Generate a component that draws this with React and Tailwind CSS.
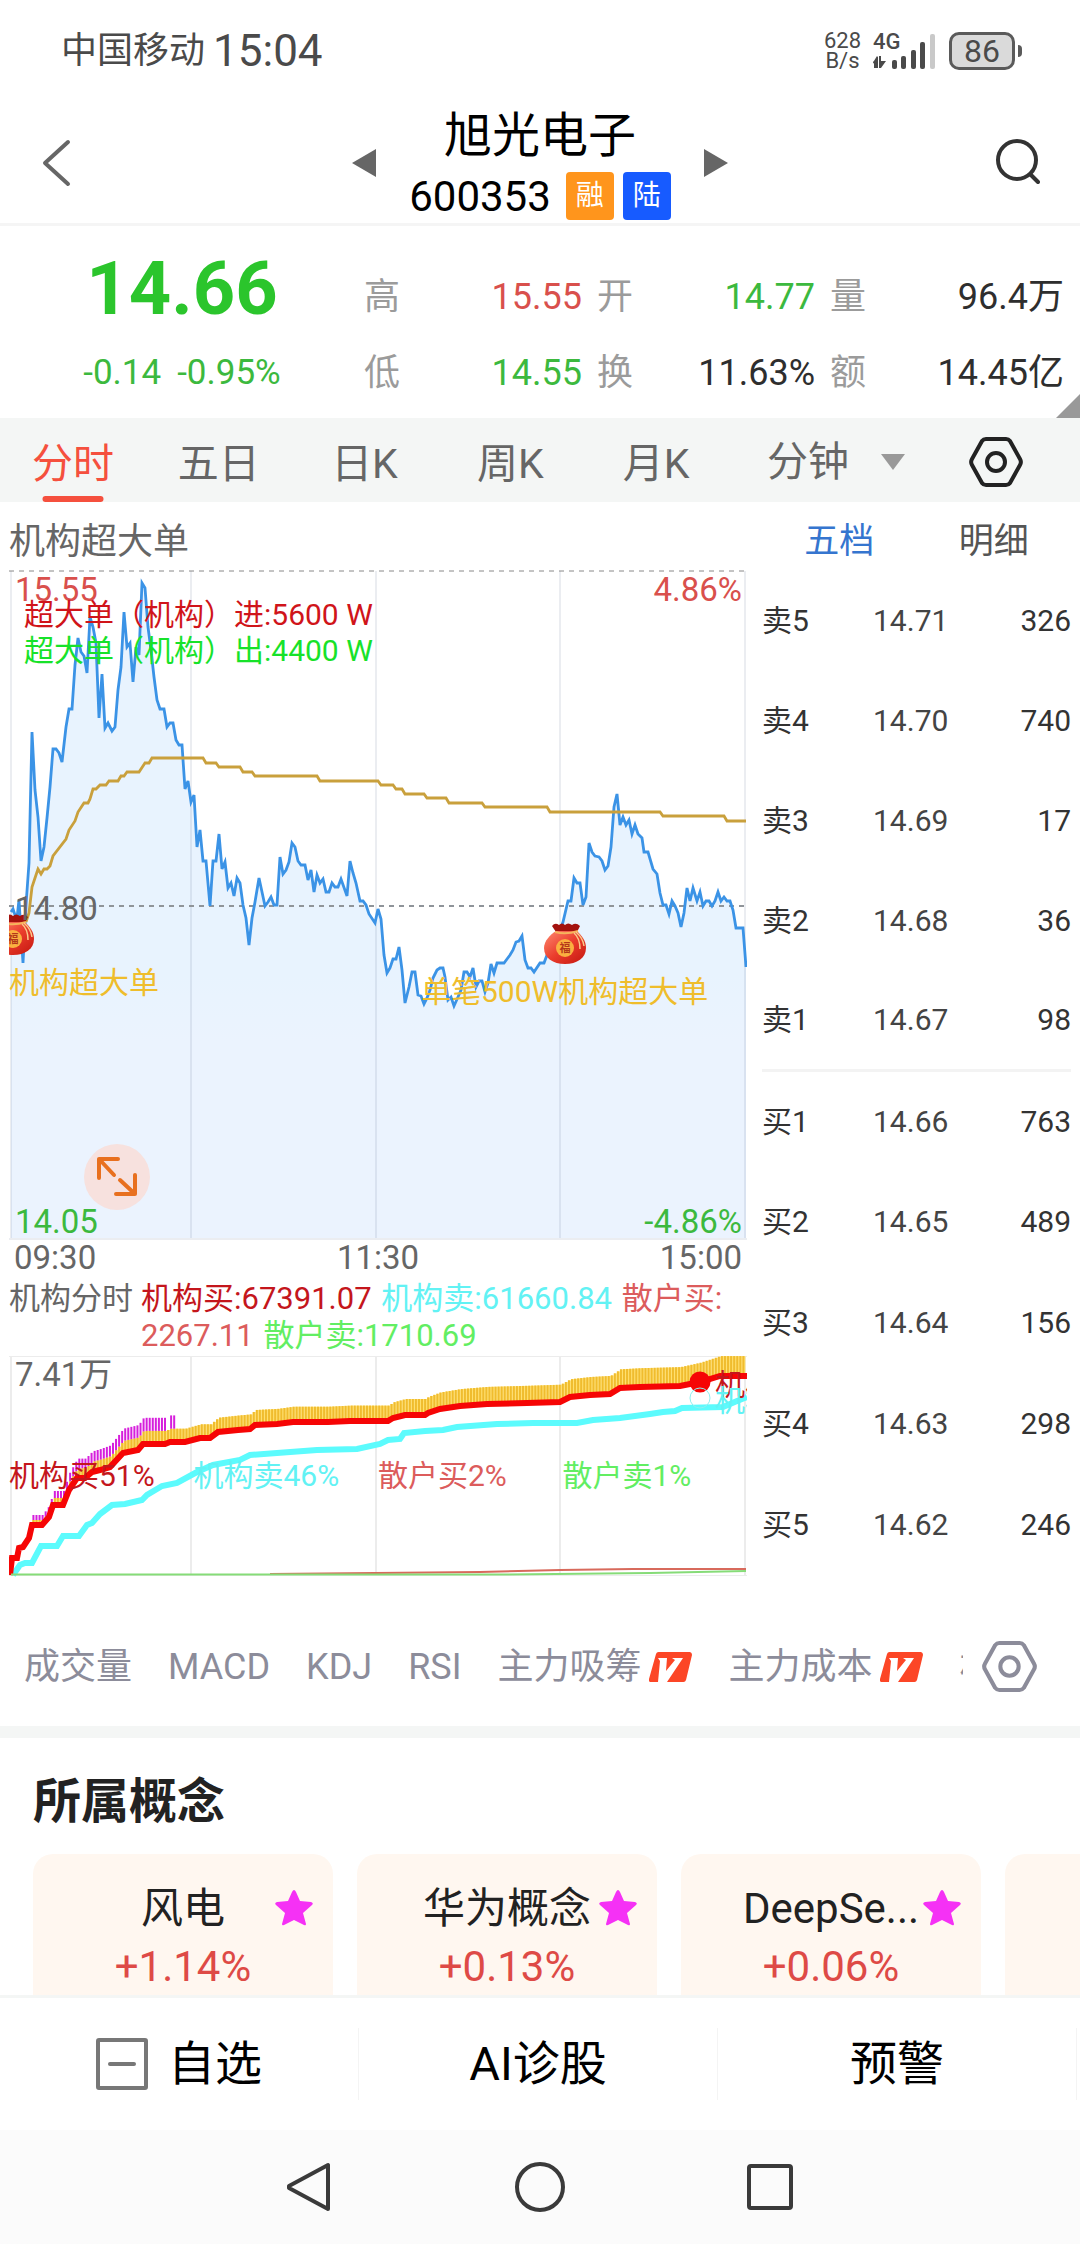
import React, { useState } from 'react';
import clsx from 'clsx';

const UP = 'text-[#d9504c]';
const DOWN = 'text-[#3cb93e]';
const PLAIN = 'text-[#2e2e2e]';

const QUOTES = [
  { label: '高', value: '15.55', tone: UP },
  { label: '开', value: '14.77', tone: DOWN },
  { label: '量', value: '96.4万', tone: PLAIN },
  { label: '低', value: '14.55', tone: DOWN },
  { label: '换', value: '11.63%', tone: PLAIN },
  { label: '额', value: '14.45亿', tone: PLAIN },
];

const PERIODS = ['分时', '五日', '日K', '周K', '月K'];

const ASKS = [
  ['卖5', '14.71', 326],
  ['卖4', '14.70', 740],
  ['卖3', '14.69', 17],
  ['卖2', '14.68', 36],
  ['卖1', '14.67', 98],
];

const BIDS = [
  ['买1', '14.66', 763],
  ['买2', '14.65', 489],
  ['买3', '14.64', 156],
  ['买4', '14.63', 298],
  ['买5', '14.62', 246],
];

const INDICATORS = [
  { name: '成交量' },
  { name: 'MACD' },
  { name: 'KDJ' },
  { name: 'RSI' },
  { name: '主力吸筹', vip: true },
  { name: '主力成本', vip: true },
  { name: '相对强弱' },
];

const CONCEPTS = [
  { name: '风电', change: '+1.14%' },
  { name: '华为概念', change: '+0.13%' },
  { name: 'DeepSe...', change: '+0.06%' },
];

const SHARES = [
  { text: '机构买51%', tone: 'text-[#c4161c]' },
  { text: '机构卖46%', tone: 'text-[#62f2f4]' },
  { text: '散户买2%', tone: 'text-[#dc5c5c]' },
  { text: '散户卖1%', tone: 'text-[#62ee62]' },
];

const PRICE_LINE = `11,912 13,909 15,915 17,918 19,900 23,963 26,905 29,863 32,732 35,790 38,817 41,861 44,847 47,818
50,787 53,749 56,749 59,753 62,762 66,727 69,709 72,709 75,665 78,638 81,652 84,656 87,673 90,617 93,627 96,643
99,718 102,674 105,728 108,723 112,731 115,727 118,690 121,667 124,612 127,647 130,643 133,682 136,647 139,655
142,583 145,588 148,627 151,650 154,677 157,700 160,709 164,709 167,727 170,723 173,723 176,740 179,745 182,745
185,789 188,781 191,802 194,795 197,847 200,830 203,861 206,861 210,906 213,861 216,861 219,834 222,869 225,862
228,888 231,883 234,896 237,878 240,883 243,905 246,918 249,945 252,918 255,902 259,878 262,892 265,906 268,902
271,897 274,905 277,905 280,857 283,874 286,870 289,862 292,843 295,847 298,861 301,865 305,865 308,880 311,870
314,892 317,875 320,883 323,879 326,892 329,892 332,883 335,887 338,887 341,879 347,896 350,861 353,873 356,883
360,901 363,901 366,905 369,914 375,923 378,909 381,919 384,955 387,973 390,968 393,959 396,959 399,947 402,970
405,1003 409,987 412,972 415,972 418,995 421,996 424,1004 427,998 430,990 433,978 437,970 440,968 443,968 445,977
448,1000 451,997 454,1006 458,997 461,990 464,972 467,972 470,977 473,968 476,987 479,981 482,981 485,992 488,983
491,964 494,973 497,963 504,963 510,955 513,950 516,942 519,941 522,936 525,960 528,968 531,968 534,972 540,963
544,963 547,955 555,943 563,922 568,901 571,901 574,878 577,883 580,883 583,905 586,897 589,843 592,852 595,856
599,857 602,861 605,870 608,866 611,847 614,807 617,794 620,825 623,817 626,825 629,820 632,834 635,825 638,834
642,838 644,852 648,852 653,869 657,874 660,893 663,905 666,905 669,914 672,901 675,906 678,913 681,927 684,913
687,888 690,901 693,888 697,901 700,892 703,906 706,901 709,901 712,906 715,901 718,892 721,901 724,897 727,901
730,901 733,910 736,928 743,928 746,967`;

const AVERAGE_LINE = `26,922 29,913 32,887 35,878 38,869 41,874 44,869 47,869 50,866 53,856 66,839 69,830 75,821 78,812
84,803 88,803 90,799 93,789 96,789 100,785 106,785 109,781 118,781 121,776 124,776 127,772 139,772 145,763 149,763
152,758 203,758 206,763 216,763 219,767 240,767 243,772 252,772 255,776 317,776 320,781 378,781 381,785 393,785
396,789 402,789 405,794 424,794 427,798 446,798 449,803 482,803 485,807 547,807 550,812 660,812 663,816 724,816
727,821 746,821`;

const ORG_BUY = [
  [10, 1575], [12, 1558], [17, 1558], [19, 1548], [23, 1547], [29, 1538], [32, 1525], [42, 1525], [49, 1517],
  [53, 1505], [63, 1505], [69, 1490], [77, 1478], [85, 1478], [92, 1472], [100, 1470], [110, 1467], [123, 1453],
  [138, 1450], [143, 1444], [165, 1444], [170, 1442], [185, 1442], [200, 1438], [210, 1438], [218, 1432],
  [238, 1430], [250, 1429], [255, 1425], [277, 1424], [293, 1422], [328, 1422], [350, 1421], [388, 1421],
  [393, 1418], [405, 1415], [425, 1415], [428, 1413], [440, 1409], [460, 1406], [487, 1404], [527, 1403],
  [560, 1402], [570, 1397], [590, 1395], [610, 1394], [620, 1388], [640, 1387], [680, 1386], [700, 1382],
  [720, 1376], [747, 1376],
];

const ORG_SELL = `13,1575 20,1565 25,1563 32,1563 41,1546 57,1546 63,1536 79,1536 87,1525 92,1523 100,1514 112,1505
125,1504 142,1500 147,1495 162,1486 177,1483 197,1472 213,1465 240,1460 250,1455 277,1453 317,1450 357,1449
380,1444 388,1440 400,1439 404,1433 425,1431 443,1430 457,1427 497,1424 533,1423 577,1423 593,1420 620,1418
650,1414 663,1412 675,1411 682,1408 723,1407 737,1401 747,1397`;

const BASE_Y = 1575;

// Height of the institutional buy line at a given x
function orgBuyAt(x) {
  const i = ORG_BUY.findIndex((p) => p[0] >= x);
  if (i <= 0) return ORG_BUY[0][1];
  const [x0, y0] = ORG_BUY[i - 1];
  const [x1, y1] = ORG_BUY[i];
  return y0 + ((y1 - y0) * (x - x0)) / (x1 - x0);
}

// One bar per traded minute, stacked on the buy line
const BARS = Array.from({ length: 240 }, (_, i) => {
  const x = 11 + i * 3.06;
  const y = orgBuyAt(x);
  const rise = (BASE_Y - y) * 0.1;
  const strong = (x > 30 && x < 165) || (x > 168 && x < 175);
  return { x, y, rise, strong };
});

const HexIcon = ({ className }) => (
  <svg viewBox="0 0 54 52" className={className} fill="none" stroke="currentColor" strokeWidth="4" strokeLinejoin="round">
    <path d="M17 3h20a5 5 0 0 1 4 2l10 18a6 6 0 0 1 0 6L41 47a5 5 0 0 1-4 2H17a5 5 0 0 1-4-2L3 29a6 6 0 0 1 0-6L13 5a5 5 0 0 1 4-2z" />
    <circle cx="27" cy="26" r="9" />
  </svg>
);

const VipMark = () => (
  <svg viewBox="0 0 44 30" className="w-11 h-[30px]" aria-hidden="true">
    <path d="M10 0h31a3 3 0 0 1 2 3l-6 25a3 3 0 0 1-3 2H2a2 2 0 0 1-2-3L7 2a3 3 0 0 1 3-2z" fill="#fc4626" />
    <path d="M9 6h9l-1 13 9-11-3-2h11L18 30H9l2-21z" fill="#fff" />
  </svg>
);

const Star = () => (
  <svg viewBox="0 0 38 36" className="absolute top-9 right-5 w-[38px] h-9" fill="#f531f5">
    <path d="M19 0q1 0 2 2l4 9 11 1q3 1 1 3l-9 8 3 11q0 2-2 1l-10-5-10 5q-2 1-2-1l3-11-9-8q-2-2 1-3l11-1 4-9q1-2 2-2z" />
  </svg>
);

const MoneyBag = ({ x, y }) => (
  <g transform={`translate(${x} ${y})`}>
    <path d="M8 3q3-4 7-1 3-3 6 0 3-3 7 0 4-3 8 1l-3 6H12z" fill="#a3120e" />
    <path d="M12 8h21c5 5 9 10 9 17 0 10-9 16-21 16S0 35 0 25C0 18 6 12 12 8z" fill="url(#bag)" />
    <path d="M11 9q11 3 23-1" fill="none" stroke="#f6b55c" strokeWidth="2" />
    <path d="M30 10q6 5 6 16M32 9q7 6 8 14" fill="none" stroke="#f9c98a" strokeWidth="1.5" />
    <circle cx="21" cy="25" r="9" fill="#fbb040" />
    <text x="21" y="29" fontSize="11" fontWeight="700" textAnchor="middle" fill="#b3371a">福</text>
  </g>
);

const StatusBar = () => (
  <div className="flex items-center justify-between h-[100px] pt-[2px] pl-[61px] pr-[58px] text-[#4a4a4a]">
    <div className="flex items-center gap-2">
      <span className="text-4xl">中国移动</span>
      <span className="text-[44px]">15:04</span>
    </div>
    <div className="flex items-center gap-3">
      <div className="text-[22px] leading-5 text-center">
        <div>628</div>
        <div>B/s</div>
      </div>
      <div className="relative">
        <span className="absolute left-0 top-0 text-[22px] leading-5 font-medium">4G</span>
        <svg viewBox="0 0 64 38" className="w-16 h-[38px]" fill="#4a4a4a">
          <path d="M4 24v12H1v-5l-2 1zM0 30l5-6v12H2v-5zM8 24v5h5l-5 7H6V24z" />
          <rect x="19" y="28" width="5" height="9" rx="2" />
          <rect x="28" y="24" width="5" height="13" rx="2" />
          <rect x="38" y="18" width="5" height="19" rx="2" />
          <rect x="47" y="10" width="5" height="27" rx="2" />
          <rect x="57" y="2" width="5" height="35" rx="2" fill="#c9c9c9" />
        </svg>
      </div>
      <div className="flex items-center gap-[3px]">
        <div className="w-[66px] h-[38px] rounded-[10px] border-[3px] border-[#5a5a5a] bg-[#dadada] text-[32px] leading-8 text-center">86</div>
        <div className="w-1 h-3 rounded-r-full bg-[#5a5a5a]" />
      </div>
    </div>
  </div>
);

const Header = () => (
  <header className="grid grid-cols-[1fr_376px_1fr] items-center px-10 pt-[6px] pb-[3px] border-b-[3px] border-[#f5f5f5]">
    <button type="button" aria-label="返回" className="justify-self-start">
      <svg viewBox="0 0 32 48" className="w-8 h-12" fill="none" stroke="#666" strokeWidth="4" strokeLinecap="round" strokeLinejoin="round">
        <path d="M28 3L5 24l23 21" />
      </svg>
    </button>
    <div className="flex items-center justify-between">
      <button type="button" aria-label="上一只">
        <svg viewBox="0 0 24 28" className="w-6 h-7" fill="#666"><path d="M24 0v28L0 14z" /></svg>
      </button>
      <div className="flex flex-col items-center gap-[6px] text-black">
        <h1 className="text-5xl leading-[60px]">旭光电子</h1>
        <div className="flex items-center h-12">
          <span className="mr-[15px] text-[42px]">600353</span>
          <span className="w-12 h-12 mr-[9px] rounded bg-[#ff951c] text-white text-[28px] leading-[48px] text-center">融</span>
          <span className="w-12 h-12 rounded bg-[#175bff] text-white text-[28px] leading-[48px] text-center">陆</span>
        </div>
      </div>
      <button type="button" aria-label="下一只">
        <svg viewBox="0 0 24 28" className="w-6 h-7" fill="#666"><path d="M0 0v28l24-14z" /></svg>
      </button>
    </div>
    <button type="button" aria-label="搜索" className="justify-self-end">
      <svg viewBox="0 0 46 48" className="w-[46px] h-12" fill="none" stroke="#333" strokeWidth="4" strokeLinecap="round">
        <circle cx="23" cy="21" r="19" />
        <path d="M37 36l7 7" />
      </svg>
    </button>
  </header>
);

const QuotePanel = () => (
  <section className="relative grid grid-cols-[364px_1fr] h-48 pr-4">
    <div className="pt-[21px] text-center text-[#2bc52c]">
      <div className="text-[74px] leading-[84px] font-bold">14.66</div>
      <div className="flex justify-center gap-4 text-[35px] leading-[84px] text-[#3cb93e]">
        <span>-0.14</span>
        <span>-0.95%</span>
      </div>
    </div>
    <dl className="grid grid-cols-[218fr_218fr_234fr] gap-x-[15px] pt-[33px] content-start text-4xl leading-[76px]">
      {QUOTES.map((q) => (
        <div key={q.label} className="flex justify-between">
          <dt className="text-[#9b9b9b]">{q.label}</dt>
          <dd className={q.tone}>{q.value}</dd>
        </div>
      ))}
    </dl>
    <svg viewBox="0 0 24 24" className="absolute right-0 bottom-0 w-6 h-6" fill="#999"><path d="M24 0v24H0z" /></svg>
  </section>
);

const PeriodTabs = () => {
  const [period, setPeriod] = useState('分时');

  return (
    <nav className="flex items-stretch h-[84px] pr-[57px] bg-[#f4f6f5] text-[41px] text-[#666]">
      {PERIODS.map((p) => (
        <button
          key={p}
          type="button"
          onClick={() => setPeriod(p)}
          className={clsx('relative flex-1 pt-4 pb-2 leading-[60px]', p === period && 'text-[#f5503e]')}
        >
          {p}
          {p === period && <span className="absolute bottom-0 left-1/2 -translate-x-1/2 w-[61px] h-[6px] rounded-full bg-[#f5503e]" />}
        </button>
      ))}
      <div className="relative flex items-center w-[204px] pt-1 pl-[38px]">
        <select aria-label="分钟" className="appearance-none w-[140px] leading-[60px] bg-transparent">
          <option>分钟</option>
        </select>
        <svg viewBox="0 0 24 16" className="absolute left-[152px] w-6 h-4 pointer-events-none" fill="#999"><path d="M0 0h24L12 16z" /></svg>
      </div>
      <button type="button" aria-label="设置" className="ml-9 pt-1 text-[#222]">
        <HexIcon className="w-[54px] h-[52px]" />
      </button>
    </nav>
  );
};

const PriceChart = () => (
  <div className="relative overflow-hidden text-[30px] leading-9">
    <svg viewBox="9 570 738 670" className="block w-full" fill="none">
      <defs>
        <linearGradient id="bag" x1="0" y1="0" x2="1" y2="1">
          <stop offset="0" stopColor="#ff8a70" />
          <stop offset="0.5" stopColor="#ea3d2c" />
          <stop offset="1" stopColor="#c4160f" />
        </linearGradient>
        <linearGradient id="area" x1="0" y1="0" x2="0" y2="1">
          <stop offset="0.6" stopColor="#e8f3fe" />
          <stop offset="0.7" stopColor="#ebf3fe" />
        </linearGradient>
      </defs>
      <polygon points={`11,1238 ${PRICE_LINE} 746,1238`} fill="url(#area)" />
      <path d="M11 571V1239M191 571V1239M376 571V1239M560 571V1239M745 571V1239M9 1239H747" stroke="#5a6b8c" strokeOpacity="0.12" strokeWidth="2" />
      <path d="M9 571H747" stroke="#888" strokeDasharray="5 5" strokeWidth="1" />
      <path d="M9 906H747" stroke="#8f9499" strokeDasharray="5 5" strokeWidth="2" />
      <polyline points={PRICE_LINE} stroke="#3b93e6" strokeWidth="2.8" />
      <polyline points={AVERAGE_LINE} stroke="#c9a03c" strokeWidth="2.8" />
      <MoneyBag x={-8} y={914} />
      <MoneyBag x={544} y={923} />
    </svg>
    <span className="absolute left-[6px] top-[2px] text-[33px] text-[#d9504c]">15.55</span>
    <span className="absolute right-[5px] top-[2px] text-[33px] text-[#d9504c]">4.86%</span>
    <div className="absolute left-[15px] top-[27px] whitespace-pre">
      <p className="text-[#d0141a]">超大单（机构）进:5600 W</p>
      <p className="text-[#17e22a]">超大单（机构）出:4400 W</p>
    </div>
    <span className="absolute left-[6px] top-[321px] text-[33px] text-[#666]">14.80</span>
    <span className="absolute left-0 top-[395px] text-[#efbd2c]">机构超大单</span>
    <span className="absolute left-[412px] top-[404px] text-[#efbd2c]">单笔500W机构超大单</span>
    <button type="button" aria-label="全屏" className="absolute left-[75px] top-[574px] w-[66px] h-[66px] rounded-full bg-[#f7e1de]">
      <svg viewBox="0 0 66 66" fill="none" stroke="#e8701f" strokeWidth="4" strokeLinecap="round" strokeLinejoin="round">
        <path d="M34 15H15v19M15 15l15 16M51 31v19H32M51 50L36 36" />
      </svg>
    </button>
    <span className="absolute left-[6px] bottom-0 text-[33px] text-[#3cb93e]">14.05</span>
    <span className="absolute right-[5px] bottom-0 text-[33px] text-[#3cb93e]">-4.86%</span>
  </div>
);

const FlowChart = () => (
  <div className="relative overflow-hidden text-[30px] leading-9">
    <svg viewBox="9 1355 738 222" className="block w-full" fill="none">
      <path d="M11 1356V1576M191 1356V1576M376 1356V1576M560 1356V1576M745 1356V1576" stroke="#ececec" strokeWidth="2" />
      <path d="M9 1356.5H747M9 1575.5H747" stroke="#ececec" />
      {BARS.map((b) => (
        <g key={b.x}>
          <rect x={b.x} y={b.y - b.rise} width="3.06" height={b.rise} fill="#ffe070" />
          <rect x={b.x} y={b.y - b.rise} width="2" height={b.rise} fill="#f0bc2e" />
          {b.strong && <rect x={b.x} y={b.y - b.rise * 2} width="2" height={b.rise} fill="#d61fdc" />}
        </g>
      ))}
      <polyline points={ORG_SELL} stroke="#5cfbfd" strokeWidth="6" />
      <polyline points={ORG_BUY.join(' ')} stroke="#f60505" strokeWidth="6" />
      <path d="M270 1574L480 1572 560 1570 633 1569H746" stroke="#d86a5c" strokeWidth="2" />
      <path d="M11 1574.500H500L650 1573 746 1571" stroke="#86dc78" strokeWidth="2" />
      <circle cx="700" cy="1382" r="10.500" fill="#f60505" />
      <circle cx="700" cy="1398" r="10" stroke="#8ff0f0" />
    </svg>
    <span className="absolute left-[6px] top-[2px] text-[33px] text-[#666]">7.41万</span>
    <div className="absolute left-[706px] top-[12px] whitespace-nowrap">
      <p className="h-4 text-[#c4161c]">机构买</p>
      <p className="text-[#62f2f4]">机构卖</p>
    </div>
    <div className="absolute inset-x-0 top-[103px] grid grid-cols-4">
      {SHARES.map((s) => (
        <span key={s.text} className={s.tone}>{s.text}</span>
      ))}
    </div>
  </div>
);

const BookRows = ({ rows, rowClass }) => rows.map(([level, price, volume]) => (
  <tr key={level} className={rowClass}>
    <th scope="row" className="w-[111px] p-0 font-normal text-left">{level}</th>
    <td className="p-0 text-[#444]">{price}</td>
    <td className="p-0 text-right">{volume}</td>
  </tr>
));

const OrderBook = () => (
  <aside className="w-[333px] pl-[15px] pr-[9px]">
    <div className="grid grid-cols-2 h-[68px] pt-3 text-[35px] leading-[56px] text-[#555]">
      <button type="button" className="text-[#3575cf]">五档</button>
      <button type="button">明细</button>
    </div>
    <table className="w-full border-collapse text-[30px] text-[#333]">
      <tbody className="border-b-[3px] border-[#f3f3f3]">
        <BookRows rows={ASKS} rowClass="h-[100px]" />
      </tbody>
      <tbody>
        <BookRows rows={BIDS} rowClass="h-[101px]" />
      </tbody>
    </table>
  </aside>
);

const ChartArea = () => (
  <section className="flex">
    <div className="flex-1 min-w-0 pl-[9px]">
      <h2 className="h-[68px] pt-3 text-4xl leading-[56px] text-[#666]">机构超大单</h2>
      <PriceChart />
      <div className="flex justify-between px-[5px] text-[33px] leading-9 text-[#666]">
        <span>09:30</span>
        <span>11:30</span>
        <span>15:00</span>
      </div>
      <div className="flex gap-2 pt-1 pb-[1px] text-[31px] leading-[37px] whitespace-nowrap">
        <span className="text-[#666]">机构分时</span>
        <p>
          <span className="mr-[2px] text-[#c4161c]">机构买:67391.07</span>{' '}
          <span className="mr-[2px] text-[#62f2f4]">机构卖:61660.84</span>{' '}
          <span className="mr-[2px] text-[#dc5c5c]">散户买:<br />2267.11</span>{' '}
          <span className="text-[#62ee62]">散户卖:1710.69</span>
        </p>
      </div>
      <FlowChart />
    </div>
    <OrderBook />
  </section>
);

const IndicatorBar = () => (
  <div className="flex items-center h-[149px] pt-[30px] pr-[43px] text-[#8c8c9a]">
    <div className="flex flex-1 min-w-0 gap-9 pl-6 overflow-hidden whitespace-nowrap text-4xl">
      {INDICATORS.map((it) => (
        <button key={it.name} type="button" className="flex shrink-0 items-center gap-[7px]">
          {it.name}
          {it.vip && <VipMark />}
        </button>
      ))}
    </div>
    <button type="button" aria-label="指标设置" className="ml-[19px]">
      <HexIcon className="w-[55px] h-[53px]" />
    </button>
  </div>
);

const Concepts = () => (
  <section className="border-t-[12px] border-[#f4f6f5] pt-[34px]">
    <h2 className="pl-[33px] text-5xl leading-[60px] font-bold text-[#222]">所属概念</h2>
    <div className="flex gap-6 pl-[33px] mt-[22px] overflow-hidden">
      {CONCEPTS.map((c) => (
        <a key={c.name} href="#" className="relative shrink-0 w-[300px] h-[180px] pt-[26px] rounded-[20px] bg-[#fff7f0] text-[42px] leading-[58px] text-center">
          <div className="text-[#222]">{c.name}</div>
          <div className="text-[#de4a46]">{c.change}</div>
          <Star />
        </a>
      ))}
      <div className="shrink-0 w-[300px] h-[180px] rounded-[20px] bg-[#fff7f0]" />
    </div>
  </section>
);

const ActionBar = () => (
  <footer className="flex items-center h-[135px] pr-[3px] border-t-[3px] border-[#f4f6f5] bg-white text-[47px] text-black">
    <button type="button" className="flex flex-1 items-center justify-center gap-5 h-[72px] border-r border-[#f4f4f4]">
      <svg viewBox="0 0 52 52" className="w-[52px] h-[52px]" fill="none" stroke="#777" strokeWidth="4">
        <rect x="2" y="2" width="48" height="48" rx="1" />
        <path d="M14 26h24" strokeLinecap="round" />
      </svg>
      自选
    </button>
    <button type="button" className="flex-1 h-[72px] border-r border-[#f4f4f4]">AI诊股</button>
    <button type="button" className="flex-1 h-[72px] border-r border-[#f4f4f4]">预警</button>
  </footer>
);

const SystemNav = () => (
  <div className="flex items-center justify-center gap-[178px] h-[114px] bg-[#fbfbfb] text-[#3a3a3a]">
    <button type="button" aria-label="返回">
      <svg viewBox="0 0 52 52" className="w-[52px] h-[52px]" fill="none" stroke="currentColor" strokeWidth="4" strokeLinejoin="round">
        <path d="M44 4v44L5 27v-2z" />
      </svg>
    </button>
    <button type="button" aria-label="主页">
      <svg viewBox="0 0 52 52" className="w-[52px] h-[52px]" fill="none" stroke="currentColor" strokeWidth="4">
        <circle cx="26" cy="26" r="23" />
      </svg>
    </button>
    <button type="button" aria-label="最近任务">
      <svg viewBox="0 0 52 52" className="w-[52px] h-[52px]" fill="none" stroke="currentColor" strokeWidth="4">
        <rect x="5" y="5" width="42" height="42" rx="2" />
      </svg>
    </button>
  </div>
);

export default function App() {
  return (
    <div className="flex flex-col h-screen overflow-hidden bg-white font-[Roboto,'Noto_Sans_CJK_SC',sans-serif]">
      <StatusBar />
      <Header />
      <main className="flex-1 min-h-0 overflow-hidden">
        <QuotePanel />
        <PeriodTabs />
        <ChartArea />
        <IndicatorBar />
        <Concepts />
      </main>
      <ActionBar />
      <SystemNav />
    </div>
  );
}
